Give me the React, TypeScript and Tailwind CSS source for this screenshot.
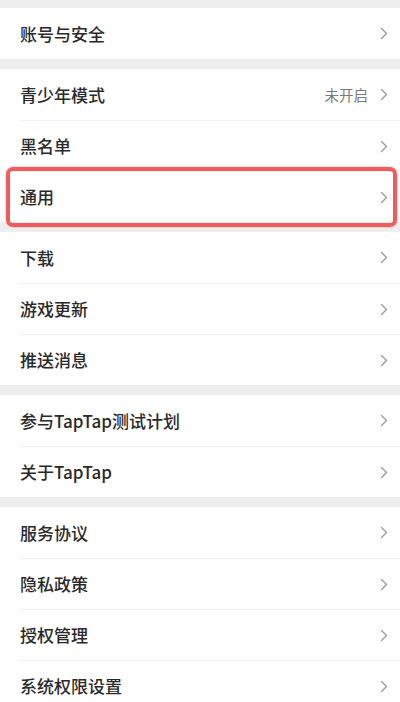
import React from 'react';

type Item = { label: string; value?: string; highlight?: boolean };

const sections: Item[][] = [
  [{ label: '账号与安全' }],
  [{ label: '青少年模式', value: '未开启' }, { label: '黑名单' }, { label: '通用', highlight: true }],
  [{ label: '下载' }, { label: '游戏更新' }, { label: '推送消息' }],
  [{ label: '参与TapTap测试计划' }, { label: '关于TapTap' }],
  [{ label: '服务协议' }, { label: '隐私政策' }, { label: '授权管理' }, { label: '系统权限设置' }],
];

function Chevron() {
  return (
    <svg width="8" height="13" viewBox="0 0 8 13" fill="none" className="shrink-0">
      <polyline points="1.5,1.5 6.5,6.5 1.5,11.5" stroke="#9a9a9a" strokeWidth="1.4" strokeLinecap="round" strokeLinejoin="round" />
    </svg>
  );
}

function Row({ item, first }: { item: Item; first: boolean }) {
  return (
    <div className="relative">
      {!first && <div className="ml-5 h-px bg-[#f0f0f0]" />}
      <div className={`flex items-center justify-between pl-5 pr-3 ${first ? 'h-[51px]' : 'h-[50px]'}`}>
        <span className="text-[17px] font-medium text-[#2a2a2a]">{item.label}</span>
        <div className="flex items-center gap-3">
          {item.value && <span className="text-[14.5px] text-[#7a7a7a]">{item.value}</span>}
          <Chevron />
        </div>
      </div>
      {item.highlight && (
        <div className="pointer-events-none absolute -top-[4px] -bottom-[5px] left-[6px] right-[3px] rounded-[7px] border-[4px] border-[#f05c5c] shadow-[0_0_2px_rgba(240,92,92,0.6)]" />
      )}
    </div>
  );
}

export default function App() {
  return (
    <div
      className="h-[702px] w-[400px] overflow-hidden bg-[#eeeeee] pt-2"
      style={{ fontFamily: '"Noto Sans CJK SC", "Noto Sans", sans-serif' }}
    >
      <div className="flex flex-col gap-[10px]">
        {sections.map((section, i) => (
          <div key={i} className="bg-white">
            {section.map((item, j) => (
              <Row key={item.label} item={item} first={j === 0} />
            ))}
          </div>
        ))}
      </div>
    </div>
  );
}
